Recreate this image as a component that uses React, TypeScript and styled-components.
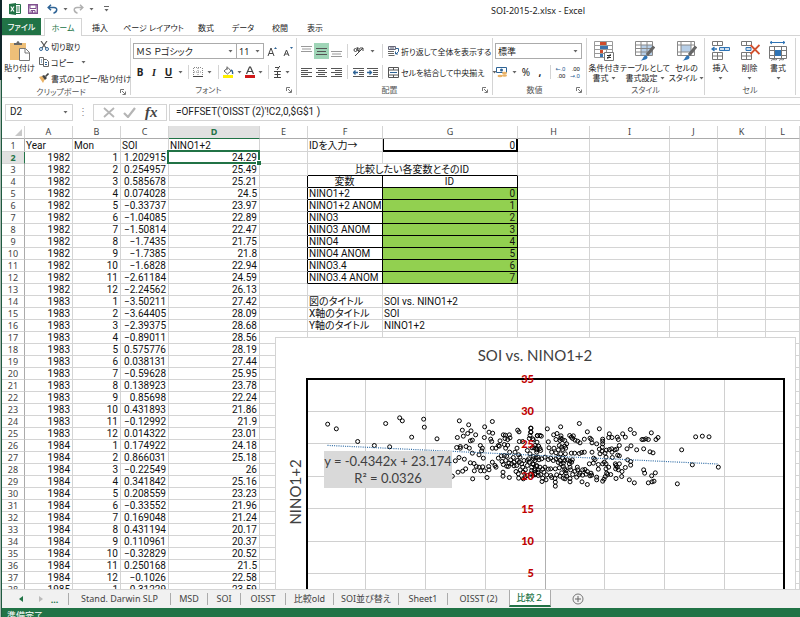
import React from "react";
import styled, { createGlobalStyle, css } from "styled-components";

const UI = '"Noto Sans", "Noto Sans CJK JP", sans-serif';
const CELL = 'Roboto, "Noto Sans CJK JP", sans-serif';
const CHART = 'Lato, "Noto Sans CJK JP", sans-serif';
const GREEN = "#217346";
const LINE = "#d4d4d4";
const BLUE = "#2f6496";

const Global = createGlobalStyle`
  * { box-sizing: border-box; }
  html, body { margin: 0; padding: 0; background: #fff; overflow: hidden; }
  button, input, select { font: inherit; color: inherit; margin: 0; padding: 0; border: 0; background: transparent; border-radius: 0; }
  svg { display: block; flex: none; }
`;

const Window = styled.div`
  display: flex;
  flex-direction: column;
  height: 100vh;
  padding-left: 2px;
  font-family: ${UI};
  font-size: 8px;
  line-height: 11px;
  color: #222;
  font-feature-settings: "palt";
  background: linear-gradient(#10262a, #10262a) 0 0 / 2px 80px no-repeat,
    linear-gradient(90deg, #a9bab2 50%, #1f5a40 50%) 0 80px / 2px 100% no-repeat, #fff;
`;

/* ---------- title bar ---------- */
const TitleBar = styled.header`
  display: flex;
  align-items: center;
  height: 18px;
  flex: none;
  padding-left: 6px;
`;
const QuickButton = styled.button<{ $w: number }>`
  display: flex;
  align-items: center;
  justify-content: center;
  gap: 5px;
  width: ${(p) => p.$w}px;
  height: 18px;
`;
const Title = styled.h1`
  margin: 2px 0 0 376px;
  font-size: 9px;
  font-weight: 400;
  white-space: nowrap;
`;

/* ---------- ribbon tabs ---------- */
const Tabs = styled.nav`
  display: flex;
  height: 18px;
  flex: none;
  border-bottom: 1px solid ${LINE};
`;
const Tab = styled.button<{ $w: number; $kind?: "file" | "active" }>`
  width: ${(p) => p.$w}px;
  height: 18px;
  white-space: nowrap;
  text-align: center;
  ${(p) => p.$kind === "file" && css`background: ${GREEN}; color: #fff; margin-right: 3px; height: 17px; font-weight: 500;`}
  ${(p) => p.$kind === "active" && css`background: #fff; color: ${GREEN}; border: 1px solid ${LINE}; border-bottom: 0;`}
`;

/* ---------- ribbon ---------- */
const Ribbon = styled.section`
  display: flex;
  height: 62px;
  flex: none;
  padding: 2px 0;
  border-bottom: 1px solid ${LINE};
`;
const Group = styled.div<{ $w: number }>`
  display: flex;
  flex-direction: column;
  width: ${(p) => p.$w}px;
  flex: none;
  border-right: 1px solid ${LINE};
`;
const GroupBody = styled.div<{ $row?: boolean }>`
  display: flex;
  flex-direction: ${(p) => (p.$row ? "row" : "column")};
  flex: 1;
  padding: ${(p) => (p.$row ? "0" : "5px 2px 0")};
`;
const GroupFoot = styled.div`
  display: flex;
  align-items: center;
  height: 11px;
  color: #555;
  span { flex: 1; text-align: center; }
  button { width: 10px; }
`;
const Row = styled.div`
  display: flex;
  align-items: center;
  height: 16px;
  margin-bottom: 4px;
  & + & { margin: 0; height: 18px; }
`;
const Tool = styled.button<{ $w: number; $on?: boolean; $bold?: boolean }>`
  display: flex;
  align-items: center;
  justify-content: center;
  width: ${(p) => p.$w}px;
  height: 16px;
  flex: none;
  font-size: 10px;
  white-space: nowrap;
  background: ${(p) => (p.$on ? "#9fd5b7" : "transparent")};
  font-weight: ${(p) => (p.$bold ? 700 : 400)};
  i { font-family: "Liberation Serif", serif; }
`;
const TextTool = styled.button`
  display: flex;
  align-items: center;
  gap: 2px;
  height: 16px;
  white-space: nowrap;
  padding-left: 2px;
  svg:nth-child(2) { margin-left: 5px; }
`;
const Sep = styled.span`
  width: 1px;
  height: 14px;
  flex: none;
  margin: 0 3px;
  background: ${LINE};
`;
const Combo = styled.label<{ $w: number }>`
  display: flex;
  align-items: center;
  width: ${(p) => p.$w}px;
  height: 16px;
  flex: none;
  border: 1px solid #ababab;
  padding: 0 3px 0 2px;
  & + & { border-left: 0; }
  select { appearance: none; flex: 1; min-width: 0; font-size: 9px; line-height: 13px; color: #222; outline: 0; }
`;
const BigTool = styled.button<{ $w: number }>`
  display: flex;
  flex-direction: column;
  align-items: center;
  width: ${(p) => p.$w}px;
  flex: none;
  padding-top: 3px;
  line-height: 10px;
  white-space: nowrap;
  svg:first-child { margin-bottom: 2px; }
`;
const Caption = styled.span`
  display: flex;
  align-items: center;
  gap: 2px;
  height: 10px;
  && svg { margin: 0; }
`;
const ClipStack = styled.div`
  display: flex;
  flex-direction: column;
`;

const Caret = () => (
  <svg width="5" height="3" viewBox="0 0 5 3"><path d="M0.5 0h4L2.5 2.5z" fill="#666" /></svg>
);
const Launcher = () => (
  <button aria-label="詳細">
    <svg width="6" height="6" viewBox="0 0 6 6"><path d="M.5 4V.5H4M2 2l3 3M5.500 2.500v3h-3" fill="none" stroke="#777" /></svg>
  </button>
);
const Lines = ({ d, color = "#555" }: { d: string; color?: string }) => (
  <svg width="11" height="11" viewBox="0 0 11 11"><path d={d} fill="none" stroke={color} /></svg>
);

const ExcelLogo = () => (
  <svg width="12" height="12" viewBox="0 0 12 12">
    <path d="M6 1.500h5.500v9H6" fill="#fff" stroke={GREEN} />
    <path d="M7.500 4h3M7.500 6h3M7.500 8h3" stroke={GREEN} />
    <path d="M0 1l7-1v12l-7-1z" fill={GREEN} />
    <path d="M1.800 3.500l3.200 5M5 3.500l-3.200 5" stroke="#fff" strokeWidth="1.200" />
  </svg>
);
const SaveIcon = () => (
  <svg width="10" height="10" viewBox="0 0 10 10">
    <path d="M.7.7h8.600v8.600H.7z" fill="#fff" stroke="#80508f" strokeWidth="1.400" />
    <path d="M2 1v3.500h6V1M3 9V6.500h4V9" fill="none" stroke="#80508f" /><path d="M4 7h1v2H4z" fill="#80508f" />
  </svg>
);
const UndoIcon = ({ flip, color }: { flip?: boolean; color: string }) => (
  <svg width="11" height="10" viewBox="0 0 11 10">
    <g transform={flip ? "translate(11 0) scale(-1 1)" : undefined} fill="none" stroke={color} strokeWidth="1.500">
      <path d="M4 .8L1.200 3.500 4 6.200M1.500 3.500H7c4 0 3.500 4.500-.5 5.700" />
    </g>
  </svg>
);
const PasteIcon = () => (
  <svg width="20" height="20" viewBox="0 0 20 20">
    <path d="M0 2h16v17H0z" fill="#eebf78" />
    <path d="M4 4V2h2.500C6.500-.5 9.500-.5 9.500 2H12v2z" fill="#666" />
    <path d="M9.500 7.500h6l4 4v8h-10z" fill="#fff" stroke="#777" /><path d="M15 7.500V12h4.500" fill="none" stroke="#777" />
  </svg>
);
const CutIcon = () => (
  <svg width="10" height="10" viewBox="0 0 10 10" fill="none">
    <path d="M2 0l5 7M8 0L3 7" stroke="#555" strokeWidth="1.200" />
    <circle cx="2" cy="8" r="1.500" stroke={BLUE} /><circle cx="8" cy="8" r="1.500" stroke={BLUE} />
  </svg>
);
const CopyIcon = () => (
  <svg width="10" height="10" viewBox="0 0 10 10" fill="#fff" stroke="#666">
    <path d="M.5.5h4v7h-4z" /><path d="M4.500 2.500h3l2 2v5h-5z" /><path d="M2 3h1M2 5h1M6 5.500h2M6 7.500h2" stroke={BLUE} />
  </svg>
);
const BrushIcon = () => (
  <svg width="10" height="10" viewBox="0 0 10 10">
    <path d="M0 4l3-1 3 3-2 4z" fill="#e9b266" /><path d="M3 3l2-1 3 3-2 2z" fill="#444" /><path d="M6.500 3.500L9.500.5" stroke="#444" strokeWidth="1.600" />
  </svg>
);
const BorderIcon = () => (
  <svg width="10" height="10" viewBox="0 0 10 10" fill="none">
    <path d="M.5 1v8M9.500 1v8M5 1v8M1 .5h8M1 5h8" stroke="#888" strokeDasharray="1 1" /><path d="M0 9.500h10" stroke="#444" />
  </svg>
);
const FillIcon = () => (
  <svg width="12" height="12" viewBox="0 0 12 12">
    <path d="M2 5l4-3.500L9 5 5.500 8z" fill="#fff" stroke="#666" /><path d="M5 4V.5" stroke="#666" /><path d="M9 4c2 1 2 2 1.500 4" stroke={BLUE} fill="none" strokeWidth="1.400" />
    <path d="M1 9h10v3H1z" fill="#fff000" />
  </svg>
);
const FontColorIcon = () => (
  <svg width="12" height="12" viewBox="0 0 12 12">
    <path d="M2.500 8L5.500 1h1l3 7M4 5.500h4" fill="none" stroke="#444" strokeWidth="1.200" /><path d="M1 9h10v3H1z" fill="#d01818" />
  </svg>
);
const RubyIcon = () => (
  <svg width="9" height="12" viewBox="0 0 9 12" fill="none" stroke="#444">
    <path d="M2 1.500h4l-2 2.500M6.500 0v1M1 5.500h7M4.500 5.500v6M1.500 8.500h6M1 11.500h7" />
  </svg>
);
const OrientIcon = () => (
  <svg width="11" height="11" viewBox="0 0 11 11" fill="none" stroke="#444">
    <circle cx="2.500" cy="4" r="1.500" /><circle cx="5.500" cy="3.500" r="1.300" /><path d="M4 1l2 5M2 10L10 2M7 2h3v3" />
  </svg>
);
const IndentIcon = ({ right }: { right?: boolean }) => (
  <svg width="11" height="11" viewBox="0 0 11 11" fill="none">
    <path d="M0 1.500h11M6 3.500h5M6 5.500h5M6 7.500h5M0 9.500h11" stroke="#555" />
    <path d={right ? "M0 5.500h4M2.500 3.500l2 2-2 2" : "M5 5.500H1M2.500 3.500l-2 2 2 2"} stroke={BLUE} strokeWidth="1.300" />
  </svg>
);
const WrapIcon = () => (
  <svg width="11" height="11" viewBox="0 0 11 11" fill="none">
    <path d="M.5.500h7v3h-7zM2 2h4" fill="#e4e8ee" stroke="#667" /><path d="M0 5.500h6M0 7.500h6M.5 9.500h6" stroke="#666" /><path d="M8 2.500h2.500V5.500L8 8M7.500 5.500V8H10" stroke={BLUE} />
  </svg>
);
const MergeIcon = () => (
  <svg width="11" height="11" viewBox="0 0 11 11" fill="none">
    <path d="M.5.500h10v10H.5zM.5 3h10M.5 8h10M5.500 0v3M5.500 8v3" stroke="#555" /><path d="M2 5.500h7" stroke={BLUE} />
  </svg>
);
const MoneyIcon = () => (
  <svg width="12" height="12" viewBox="0 0 12 12">
    <path d="M.5 1.500h10v5H.5z" fill="#fff" stroke={BLUE} /><circle cx="5.500" cy="4" r="1.500" fill={BLUE} />
    <ellipse cx="8.500" cy="7" rx="2.500" ry="1.300" fill="#e9b266" /><ellipse cx="8.500" cy="9.500" rx="2.500" ry="1.300" fill="#e9b266" /><ellipse cx="4" cy="10" rx="2.500" ry="1.300" fill="#e9b266" />
  </svg>
);
const DigitText = styled.span`
  display: flex;
  flex-direction: column;
  align-items: flex-end;
  font: 6px/7px Roboto, "DejaVu Sans", sans-serif;
  b { font-weight: 400; color: ${BLUE}; }
`;
const CondIcon = () => (
  <svg width="20" height="20" viewBox="0 0 20 20">
    <path d="M.5.500h18v16H.5zM.5 4.500h18M.5 8.500h18M.5 12.500h18M6.500 0v17M12.500 0v17" fill="#fff" stroke="#999" />
    <path d="M6 1h4v3H6zM6 9h3v3H6z" fill="#cf4b2b" /><path d="M6 5h8v3H6zM6 13h3v3H6z" fill="#3a73ad" /><path d="M10 1h2v3h-2z" fill="#cf4b2b" />
    <path d="M10.500 11.500h9v8h-9z" fill="#fff" stroke="#777" /><path d="M13 14.500h4M13 16.500h4M16.500 13l-3 5" stroke="#333" />
  </svg>
);
const TableStyleIcon = ({ cell }: { cell?: boolean }) => (
  <svg width="20" height="20" viewBox="0 0 20 20">
    <path d="M.5.500h17v14H.5z" fill="#fff" stroke="#888" />
    <path d={cell ? "M4 4h10v7H4z" : "M6 4h11v10H6z"} fill="#b7cfe8" />
    <path d={cell ? "M.5 4h17M.5 11h17M4 .5v14M14 .5v14" : "M.5 4h17M.5 7.500h17M.5 11h17M6 .5v14M12 .5v14"} fill="none" stroke="#888" />
    <path d="M19 5.500L12 14" stroke="#666" strokeWidth="3" /><path d="M5 19.500c3 0 3-5 6-5 3 1 2 5-6 5z" fill="#2f74b5" />
  </svg>
);
const CellGrid = ({ mode }: { mode: "insert" | "delete" | "format" }) => (
  <svg width="20" height="20" viewBox="0 0 20 20" fill="#fff" stroke="#777">
    {mode === "format" ? (
      <>
        <path d="M1.500 5.500h17v12h-17zM1.500 9.500h17M1.500 14.500h17M6.500 5.500v12M13.500 5.500v12" />
        <path d="M7 9h6v6H7z" fill="#2f74b5" stroke="none" />
        <path d="M2 1.500h15M4 0L2 1.500 4 3M15 0l2 1.500L15 3" fill="none" stroke="#2f74b5" />
        <path d="M3 19.500c2-2 4 0 6-1M11 19.500c2-2 3 0 5-1" fill="none" />
      </>
    ) : (
      <>
        <path d="M1.500.5h10v4h-10zM6.500 0v5M1.500 11.500h10v7h-10zM6.500 11v8M1.500 15h10" />
        {mode === "insert" ? (
          <><path d="M8.500 6.500h10v3h-10zM13.500 6v4" fill="#cfe0f0" stroke="#2f74b5" /><path d="M1 8h5M3.500 6L1 8l2.500 2" fill="none" stroke="#2f74b5" strokeWidth="1.300" /></>
        ) : (
          <><path d="M6 6.500h5v3H6z" fill="#cfe0f0" stroke="#2f74b5" /><path d="M10.500 4l9 9M19.500 4l-9 9" stroke="#d2522f" strokeWidth="1.800" /></>
        )}
      </>
    )}
  </svg>
);

/* ---------- formula bar ---------- */
const FormulaBar = styled.section`
  display: flex;
  align-items: center;
  height: 28px;
  flex: none;
  padding-left: 3px;
  font-family: ${CELL};
  font-size: 10px;
`;
const Boxed = styled.div<{ $w?: number }>`
  display: flex;
  align-items: center;
  height: 17px;
  border: 1px solid ${LINE};
  padding: 0 4px;
  ${(p) => (p.$w ? css`width: ${p.$w}px; flex: none;` : css`flex: 1; border-right: 0; padding-left: 6px; margin-left: 2px;`)}
  input { flex: 1; min-width: 0; outline: 0; line-height: 14px; }
`;
const Dots = styled.span`
  width: 20px;
  flex: none;
  text-align: center;
  color: #888;
  line-height: 14px;
`;
const FxButton = styled.button`
  display: flex;
  justify-content: center;
  align-items: center;
  flex: 1;
  height: 15px;
  color: #444;
  font: italic 700 15px/14px "Liberation Serif", serif;
`;

/* ---------- sheet ---------- */
const Sheet = styled.main`
  position: relative;
  flex: 1;
  min-height: 0;
  overflow: hidden;
`;
const Grid = styled.table`
  width: 100%;
  table-layout: fixed;
  border-collapse: separate;
  border-spacing: 0;
  font-family: ${CELL};
  font-size: 10px;
  line-height: 11px;
  color: #111;
`;
const ColHead = styled.th<{ $on?: boolean }>`
  height: 13px;
  padding: 0;
  font: ${(p) => (p.$on ? 700 : 400)} 9px/12px ${UI};
  color: ${(p) => (p.$on ? GREEN : "#444")};
  background: ${(p) => (p.$on ? "#e1e1e1" : "#fff")};
  border-right: 1px solid ${LINE};
  border-bottom: 1px solid ${(p) => (p.$on ? GREEN : "#ababab")};
  svg { margin: 0 2px 0 auto; }
`;
const RowHead = styled.th<{ $on?: boolean }>`
  padding: 0;
  font: ${(p) => (p.$on ? 700 : 400)} 9px/11px ${UI};
  color: ${(p) => (p.$on ? GREEN : "#444")};
  background: ${(p) => (p.$on ? "#e1e1e1" : "#fff")};
  border-right: 1px solid ${(p) => (p.$on ? GREEN : "#ababab")};
  border-bottom: 1px solid ${LINE};
`;
type CellKind = "num" | "text" | "center" | "green" | "entry";
const Cell = styled.td<{ $kind?: CellKind; $right?: boolean; $bottom?: boolean }>`
  height: 12px;
  padding: ${(p) => (p.$kind === "text" ? "0 0 0 1px" : "0 2px 0 1px")};
  white-space: nowrap;
  overflow: hidden;
  text-align: ${(p) => (p.$kind === "center" ? "center" : p.$kind === "text" ? "left" : "right")};
  background: ${(p) => (p.$kind === "green" ? "#92d050" : "#fff")};
  border-right: 1px solid ${(p) => (p.$right ? "#000" : LINE)};
  border-bottom: 1px solid ${(p) => (p.$bottom ? "#000" : LINE)};
  ${(p) => p.$kind === "entry" && css`box-shadow: inset 1px 0 #000, inset -1px -1px #000; border-color: #000;`}
`;
const TallRow = styled.tr`
  td { height: 13px; }
`;
const ActiveCell = styled(Cell)`
  position: relative;
  overflow: visible;
  &::before { content: ""; position: absolute; inset: -2px -1px -1px -2px; border: 2px solid ${GREEN}; }
  &::after { content: ""; position: absolute; right: -2px; bottom: -2px; width: 4px; height: 4px; background: ${GREEN}; border: solid #fff; border-width: 1px 0 0 1px; }
`;

const series: [string, string][] = [
  ["1.202915", "24.29"], ["0.254957", "25.49"], ["0.585678", "25.21"], ["0.074028", "24.5"],
  ["−0.33737", "23.97"], ["−1.04085", "22.89"], ["−1.50814", "22.47"], ["−1.7435", "21.75"],
  ["−1.7385", "21.8"], ["−1.6828", "22.94"], ["−2.61184", "24.59"], ["−2.24562", "26.13"],
  ["−3.50211", "27.42"], ["−3.64405", "28.09"], ["−2.39375", "28.68"], ["−0.89011", "28.56"],
  ["0.575776", "28.19"], ["0.038131", "27.44"], ["−0.59628", "25.95"], ["0.138923", "23.78"],
  ["0.85698", "22.24"], ["0.431893", "21.86"], ["−0.12992", "21.9"], ["0.014322", "23.01"],
  ["0.174922", "24.18"], ["0.866031", "25.18"], ["−0.22549", "26"], ["0.341842", "25.16"],
  ["0.208559", "23.23"], ["−0.33552", "21.96"], ["0.169048", "21.24"], ["0.431194", "20.17"],
  ["0.110961", "20.37"], ["−0.32829", "20.52"], ["0.250168", "21.5"], ["−0.1026", "22.58"],
  ["−0.31229", "23.59"],
];
const variables = ["NINO1+2", "NINO1+2 ANOM", "NINO3", "NINO3 ANOM", "NINO4", "NINO4 ANOM", "NINO3.4", "NINO3.4 ANOM"];
const labels: Record<number, [string, string]> = {
  14: ["図のタイトル", "SOI vs. NINO1+2"],
  15: ["X軸のタイトル", "SOI"],
  16: ["Y軸のタイトル", "NINO1+2"],
};
const columns: [string, number | undefined][] = [
  ["A", 48], ["B", 48], ["C", 48], ["D", 91], ["E", 48], ["F", 75], ["G", 135], ["H", 72], ["I", 80], ["J", 48], ["K", 48], ["L", undefined],
];

function MiddleCells({ row }: { row: number }) {
  if (row === 3)
    return (<><Cell /><Cell colSpan={2} $kind="center" $bottom>比較したい各変数とそのID</Cell></>);
  if (row === 4)
    return (<><Cell $right /><Cell $kind="center" $right $bottom>変数</Cell><Cell $kind="center" $right $bottom>ID</Cell></>);
  if (row >= 5 && row <= 12)
    return (<><Cell $right /><Cell $kind="text" $right $bottom>{variables[row - 5]}</Cell><Cell $kind="green" $right $bottom>{row - 5}</Cell></>);
  const pair = labels[row];
  return (<><Cell /><Cell $kind="text">{pair?.[0]}</Cell><Cell $kind="text">{pair?.[1]}</Cell></>);
}

/* ---------- chart ---------- */
const ChartFrame = styled.figure`
  position: absolute;
  left: 273px;
  top: 211px;
  margin: 0;
  width: 521px;
  background: #fff;
  border: 1px solid ${LINE};
  svg { font-family: ${CHART}; overflow: visible; }
`;

/* Sample positions on a grid of three steps per chart pixel, by region. */
const clusters: { ox: number; oy: number; pts: number[] }[] = [
  { ox: -18, oy: -24, pts: [173,281,199,295,263,333,313,345,347,279,389,262,397,271,461,266,463,290,425,320,501,325,359,349,547,437] },
  { ox: 492, oy: 216, pts: [58,31,86,43,67,59,134,49,157,33,52,81,70,77,83,69,93,61,91,91,97,89,107,73,133,81,147,65,158,68,152,86,155,93,50,111,61,108,61,113,78,108,88,113,97,128,121,105,127,113,125,121,117,133,130,143,57,141,46,151,73,146,91,157,102,159,54,185,68,182,77,175,103,181,98,205,109,168,117,170,122,181,128,169,133,181,141,201,147,178,146,168,157,113,168,113,175,105,180,91,178,107,190,73,196,74,208,73,195,84,203,87,210,82,193,102,203,104,197,113,157,155,165,165,175,143,184,136,193,135,200,137,186,153,190,162,197,150,200,167,207,158,212,148,205,168,168,170,189,185,189,197,208,201,209,125,225,125,231,113,220,141,222,155,232,150,236,133,240,140,233,59,237,64,238,93,248,93,228,183,235,190,241,178,248,170,236,203,250,185,256,178,262,165,245,160,252,150,262,150,272,53,272,65,270,75,268,84,280,88,292,76,291,95,262,120,270,130,276,112,285,105,290,125,268,155,278,160,285,150,275,170,283,180,290,168,272,190,262,195,255,199,285,193,295,185,266,145,280,138,294,140,215,160,222,166,230,165,238,155,250,205] },
  { ox: 762, oy: 216, pts: [52,55,92,49,148,39,172,64,208,55,3,53,3,65,8,85,22,75,30,75,34,77,55,94,71,73,81,69,92,83,93,76,90,90,97,87,78,87,104,90,119,75,124,80,130,76,128,84,135,89,143,92,150,97,163,86,180,83,184,87,186,97,200,100,218,86,218,92,218,100,238,70,236,81,246,81,262,80,265,87,278,70,286,80,18,113,26,107,30,114,32,120,20,118,12,112,57,112,65,125,72,113,78,127,85,118,88,105,95,110,98,117,104,107,107,113,110,100,106,130,92,130,124,128,134,128,148,129,155,126,163,125,186,125,208,116,217,110,216,122,225,128,229,119,238,117,245,115,246,125,255,118,260,116,268,105,210,130,228,140,247,141,263,134,268,136,191,143,195,147,178,160,190,158,205,162,205,176,218,160,223,155,228,160,10,145,18,142,27,148,35,145,45,140,55,147,62,143,70,150,78,145,85,140,90,150,98,143,104,150,112,148,120,152,127,148,118,160,125,155,85,156,93,160,100,158,10,162,20,165,15,175,25,178,30,170,38,176,45,170,42,185,55,176,62,175,76,175,88,172,100,168,104,175,108,180,120,170,122,178,135,182,142,170,143,178,150,188,158,178,165,177,172,183,158,194,168,191,172,222,185,194,183,188,180,196,200,200,200,208,218,212,222,206,226,198,230,188,233,192,242,192,228,175,236,170,258,165,262,170,257,175,265,178,256,160,268,160,276,183,275,198,258,204,156,214,120,214,120,204,100,203,110,197,105,205,90,197,95,187,75,204,80,193,76,227,76,215,62,195,65,201,48,208,36,213,38,203,25,195,32,192,15,190,5,180,8,195,50,193,108,188,128,192,140,200,147,193] },
  { ox: 762, oy: -24, pts: [301,297,313,309,364,307,336,327,341,327,348,325,355,327,384,321,378,327,303,346,291,355,320,358,341,355,360,364,369,367,293,388,302,393,302,404,286,411,341,418,344,428,376,427,365,436,298,448,313,457,355,457,366,454,372,452,442,460,455,358,487,403,497,319,517,317,537,319,565,410] },
];

const PLOT = { left: 30, right: 508, top: 41, stepX: 59.75, stepY: 32.4 };

function ScatterChart() {
  const dots: React.ReactNode[] = [];
  clusters.forEach((c, k) => {
    for (let i = 0; i < c.pts.length; i += 2)
      dots.push(<circle key={`${k}-${i}`} cx={(c.ox + c.pts[i]) / 3} cy={(c.oy + c.pts[i + 1]) / 3 + 0.5} r="2" />);
  });
  const bottom = PLOT.top + PLOT.stepY * 7;
  return (
    <ChartFrame>
      <svg width="519" height="300" viewBox="0 0 519 300" role="img" aria-label="SOI vs. NINO1+2">
        <g stroke="#d0d0d0" shapeRendering="crispEdges">
          {[1, 2, 3, 4, 5, 6, 7].map((n) => (
            <line key={`v${n}`} x1={PLOT.left + n * PLOT.stepX} x2={PLOT.left + n * PLOT.stepX} y1={PLOT.top} y2={bottom} stroke={n === 4 ? "#b0b0b0" : undefined} />
          ))}
          {[1, 2, 3, 4, 5, 6].map((n) => (
            <line key={`h${n}`} x1={PLOT.left} x2={PLOT.right} y1={PLOT.top + n * PLOT.stepY} y2={PLOT.top + n * PLOT.stepY} />
          ))}
        </g>
        <path d={`M${PLOT.left + 1} ${bottom}V${PLOT.top}H${PLOT.right}V${bottom}`} fill="none" stroke="#000" strokeWidth="2" shapeRendering="crispEdges" />
        <g fill="none" stroke="#000">{dots}</g>
        <path d="M51.500 107.400L442 126" stroke="#2f6ca5" strokeWidth="1.200" strokeDasharray="1 1.200" />
        <g fill="#c00000" fontSize="11" fontWeight="900" textAnchor="end">
          {[35, 30, 25, 20, 15, 10, 5].map((v, n) => (
            <text key={v} x="258" y={PLOT.top + n * PLOT.stepY + 4}>{v}</text>
          ))}
        </g>
        <rect x="48" y="113" width="128" height="37" fill="#d9d9d9" />
        <g fill="#404040" textAnchor="middle">
          <g fontSize="13">
            <text x="112" y="128">y = -0.4342x + 23.174</text>
            <text x="112" y="145">R² = 0.0326</text>
          </g>
          <g fontSize="15">
            <text x="259" y="23">SOI vs. NINO1+2</text>
            <text transform="translate(25 154) rotate(-90)">NINO1+2</text>
          </g>
        </g>
      </svg>
    </ChartFrame>
  );
}

/* ---------- bottom ---------- */
const SheetTabs = styled.nav`
  display: flex;
  align-items: center;
  height: 19px;
  flex: none;
  background: #f1f1f1;
  border-top: 1px solid ${LINE};
  font-size: 9px;
  color: #444;
`;
const NavButton = styled.button<{ $w: number }>`
  display: flex;
  align-items: center;
  justify-content: center;
  width: ${(p) => p.$w}px;
  color: ${GREEN};
  font-weight: 700;
`;
const SheetTab = styled.button<{ $w: number; $on?: boolean }>`
  width: ${(p) => p.$w}px;
  height: 12px;
  flex: none;
  white-space: nowrap;
  border-left: 1px solid #ababab;
  line-height: 12px;
  ${(p) => p.$on && css`height: 17px; align-self: flex-start; background: #fff; color: ${GREEN}; font-weight: 500; font-feature-settings: normal; border-right: 1px solid #ababab; border-bottom: 2px solid ${GREEN};`}
`;
const AddSheet = styled.button`
  margin-left: 21px;
`;
const StatusBar = styled.footer`
  height: 9px;
  flex: none;
  overflow: hidden;
  padding: 3px 0 0 5px;
  background: ${GREEN};
  color: #fff;
  font-size: 9px;
  line-height: 10px;
`;

const sheetNames: [string, number][] = [
  ["Stand. Darwin SLP", 102], ["MSD", 37], ["SOI", 33], ["OISST", 45], ["比較old", 48], ["SOI並び替え", 65], ["Sheet1", 49], ["OISST (2)", 62],
];

export default function App() {
  return (
    <Window>
      <Global />
      <TitleBar>
        <QuickButton $w={13} aria-label="Excel"><ExcelLogo /></QuickButton>
        <QuickButton $w={24} aria-label="上書き保存"><SaveIcon /></QuickButton>
        <QuickButton $w={24} aria-label="元に戻す"><UndoIcon color={BLUE} /><Caret /></QuickButton>
        <QuickButton $w={28} aria-label="やり直し"><UndoIcon flip color="#b0b0b0" /><Caret /></QuickButton>
        <QuickButton $w={18} aria-label="カスタマイズ">
          <svg width="5" height="6" viewBox="0 0 5 6"><path d="M0 .5h5" stroke="#666" /><path d="M.5 3h4l-2 2.500z" fill="#666" /></svg>
        </QuickButton>
        <Title>SOI-2015-2.xlsx - Excel</Title>
      </TitleBar>

      <Tabs aria-label="リボン">
        <Tab $w={39} $kind="file">ファイル</Tab>
        <Tab $w={38} $kind="active">ホーム</Tab>
        <Tab $w={36}>挿入</Tab>
        <Tab $w={71}>ページ レイアウト</Tab>
        <Tab $w={34}>数式</Tab>
        <Tab $w={40}>データ</Tab>
        <Tab $w={34}>校閲</Tab>
        <Tab $w={36}>表示</Tab>
      </Tabs>

      <Ribbon>
        <Group $w={129}>
          <GroupBody $row>
            <BigTool $w={35}><PasteIcon /><Caption>貼り付け</Caption><Caption><Caret /></Caption></BigTool>
            <ClipStack>
              <TextTool><CutIcon />切り取り</TextTool>
              <TextTool><CopyIcon />コピー<Caret /></TextTool>
              <TextTool><BrushIcon />書式のコピー/貼り付け</TextTool>
            </ClipStack>
          </GroupBody>
          <GroupFoot><span>クリップボード</span><Launcher /></GroupFoot>
        </Group>

        <Group $w={166}>
          <GroupBody>
            <Row>
              <Combo $w={104}><select aria-label="フォント" defaultValue="pg"><option value="pg">ＭＳ Ｐゴシック</option></select><Caret /></Combo>
              <Combo $w={27}><select aria-label="フォント サイズ" defaultValue="11"><option>11</option></select><Caret /></Combo>
              <Tool $w={17} aria-label="拡大">
                <svg width="11" height="11" viewBox="0 0 11 11" fill="none"><path d="M1 10l3-8 3 8M2 7.500h4" stroke="#444" /><path d="M7 3l1.500-2L10 3z" fill={BLUE} /></svg>
              </Tool>
              <Tool $w={14} aria-label="縮小">
                <svg width="11" height="11" viewBox="0 0 11 11" fill="none"><path d="M1 10l2.500-6L6 10M2 8h3" stroke="#444" /><path d="M7 1h3L8.500 3z" fill={BLUE} /></svg>
              </Tool>
            </Row>
            <Row>
              <Tool $w={14} $bold>B</Tool>
              <Tool $w={14} $bold><i>I</i></Tool>
              <Tool $w={15} $bold><u>U</u></Tool>
              <Tool $w={9} aria-label="下線の種類"><Caret /></Tool>
              <Sep />
              <Tool $w={11} aria-label="罫線"><BorderIcon /></Tool>
              <Tool $w={12} aria-label="罫線の種類"><Caret /></Tool>
              <Sep />
              <Tool $w={12} aria-label="塗りつぶし"><FillIcon /></Tool>
              <Tool $w={10} aria-label="塗りつぶしの色"><Caret /></Tool>
              <Tool $w={12} aria-label="文字色"><FontColorIcon /></Tool>
              <Tool $w={9} aria-label="フォントの色"><Caret /></Tool>
              <Sep />
              <Tool $w={10} aria-label="ふりがな"><RubyIcon /></Tool>
              <Tool $w={10} aria-label="ふりがなの設定"><Caret /></Tool>
            </Row>
          </GroupBody>
          <GroupFoot><span>フォント</span><Launcher /></GroupFoot>
        </Group>

        <Group $w={196}>
          <GroupBody>
            <Row>
              <Tool $w={15} aria-label="上揃え"><Lines d="M0 .5h11M1 3h9M0 5.500h11" color="#999" /></Tool>
              <Tool $w={15} $on aria-label="上下中央揃え"><Lines d="M0 2.500h11M1 5.500h9M0 8.500h11" /></Tool>
              <Tool $w={15} aria-label="下揃え"><Lines d="M0 5.500h11M1 8h9M0 10.500h11" color="#999" /></Tool>
              <Sep />
              <Tool $w={14} aria-label="方向"><OrientIcon /></Tool>
              <Tool $w={14} aria-label="方向の設定"><Caret /></Tool>
              <Sep />
              <TextTool><WrapIcon />折り返して全体を表示する</TextTool>
            </Row>
            <Row>
              <Tool $w={15} aria-label="左揃え"><Lines d="M0 1.500h11M0 3.500h7M0 5.500h11M0 7.500h7M0 9.500h11" /></Tool>
              <Tool $w={15} aria-label="中央揃え"><Lines d="M0 1.500h11M2 3.500h7M0 5.500h11M2 7.500h7M0 9.500h11" /></Tool>
              <Tool $w={15} aria-label="右揃え"><Lines d="M0 1.500h11M4 3.500h7M0 5.500h11M4 7.500h7M0 9.500h11" /></Tool>
              <Sep />
              <Tool $w={14} aria-label="インデントを減らす"><IndentIcon /></Tool>
              <Tool $w={14} aria-label="インデントを増やす"><IndentIcon right /></Tool>
              <Sep />
              <TextTool><MergeIcon />セルを結合して中央揃え<Caret /></TextTool>
            </Row>
          </GroupBody>
          <GroupFoot><span>配置</span><Launcher /></GroupFoot>
        </Group>

        <Group $w={94}>
          <GroupBody>
            <Row>
              <Combo $w={87}><select aria-label="表示形式" defaultValue="g"><option value="g">標準</option></select><Caret /></Combo>
            </Row>
            <Row>
              <Tool $w={14} aria-label="通貨"><MoneyIcon /></Tool>
              <Tool $w={10} aria-label="通貨の種類"><Caret /></Tool>
              <Tool $w={14}>%</Tool>
              <Tool $w={14} $bold>,</Tool>
              <Sep />
              <Tool $w={13} aria-label="小数点以下を増やす"><DigitText><b>←.0</b><span>.00</span></DigitText></Tool>
              <Tool $w={16} aria-label="小数点以下を減らす"><DigitText><span>.00</span><b>→.0</b></DigitText></Tool>
            </Row>
          </GroupBody>
          <GroupFoot><span>数値</span><Launcher /></GroupFoot>
        </Group>

        <Group $w={118}>
          <GroupBody $row>
            <BigTool $w={34}><CondIcon /><Caption>条件付き</Caption><Caption>書式<Caret /></Caption></BigTool>
            <BigTool $w={48}><TableStyleIcon /><Caption>テーブルとして</Caption><Caption>書式設定<Caret /></Caption></BigTool>
            <BigTool $w={35}><TableStyleIcon cell /><Caption>セルの</Caption><Caption>スタイル<Caret /></Caption></BigTool>
          </GroupBody>
          <GroupFoot><span>スタイル</span></GroupFoot>
        </Group>

        <Group $w={91}>
          <GroupBody $row>
            <BigTool $w={31}><CellGrid mode="insert" /><Caption>挿入</Caption><Caption><Caret /></Caption></BigTool>
            <BigTool $w={27}><CellGrid mode="delete" /><Caption>削除</Caption><Caption><Caret /></Caption></BigTool>
            <BigTool $w={30}><CellGrid mode="format" /><Caption>書式</Caption><Caption><Caret /></Caption></BigTool>
          </GroupBody>
          <GroupFoot><span>セル</span></GroupFoot>
        </Group>
      </Ribbon>

      <FormulaBar>
        <Boxed $w={68}><input aria-label="名前ボックス" defaultValue="D2" /><Caret /></Boxed>
        <Dots>⋮</Dots>
        <Boxed $w={74}>
          <FxButton aria-label="キャンセル"><svg width="12" height="11" viewBox="0 0 12 11"><path d="M1 1l10 9M11 1L1 10" stroke="#b5b5b5" strokeWidth="1.800" /></svg></FxButton>
          <FxButton aria-label="入力"><svg width="13" height="11" viewBox="0 0 13 11"><path d="M1 6l4 4 7-9" fill="none" stroke="#b5b5b5" strokeWidth="2.200" /></svg></FxButton>
          <FxButton>fx</FxButton>
        </Boxed>
        <Boxed><input aria-label="数式バー" defaultValue="=OFFSET('OISST (2)'!C2,0,$G$1 )" /></Boxed>
      </FormulaBar>

      <Sheet>
        <Grid>
          <colgroup>
            <col style={{ width: 23 }} />
            {columns.map(([name, w]) => <col key={name} style={{ width: w }} />)}
          </colgroup>
          <thead>
            <tr>
              <ColHead><svg width="7" height="7" viewBox="0 0 7 7"><path d="M7 0v7H0z" fill="#c8c8c8" /></svg></ColHead>
              {columns.map(([name]) => <ColHead key={name} $on={name === "D"}>{name}</ColHead>)}
            </tr>
          </thead>
          <tbody>
            <TallRow>
              <RowHead>1</RowHead>
              <Cell $kind="text">Year</Cell><Cell $kind="text">Mon</Cell><Cell $kind="text">SOI</Cell><Cell $kind="text">NINO1+2</Cell>
              <Cell /><Cell $kind="text">IDを入力→</Cell><Cell $kind="entry">0</Cell>
              <Cell /><Cell /><Cell /><Cell /><Cell />
            </TallRow>
            {series.map(([soi, nino], i) => {
              const row = i + 2;
              return (
                <tr key={row}>
                  <RowHead $on={row === 2}>{row}</RowHead>
                  <Cell>{1982 + Math.floor(i / 12)}</Cell>
                  <Cell>{(i % 12) + 1}</Cell>
                  <Cell>{soi}</Cell>
                  {row === 2 ? <ActiveCell>{nino}</ActiveCell> : <Cell>{nino}</Cell>}
                  <MiddleCells row={row} />
                  <Cell /><Cell /><Cell /><Cell /><Cell />
                </tr>
              );
            })}
          </tbody>
        </Grid>
        <ScatterChart />
      </Sheet>

      <SheetTabs aria-label="シート">
        <NavButton $w={38} aria-label="前のシート"><svg width="5" height="6" viewBox="0 0 5 6"><path d="M4 0v6L0 3z" fill={GREEN} /></svg></NavButton>
        <NavButton $w={1} aria-label="次のシート"><svg width="5" height="6" viewBox="0 0 5 6"><path d="M1 0v6l4-3z" fill="#bbb" /></svg></NavButton>
        <NavButton $w={27}>...</NavButton>
        {sheetNames.map(([name, w]) => <SheetTab key={name} $w={w}>{name}</SheetTab>)}
        <SheetTab $w={42} $on>比較２</SheetTab>
        <AddSheet aria-label="新しいシート">
          <svg width="12" height="12" viewBox="0 0 12 12"><circle cx="6" cy="6" r="5" fill="none" stroke="#777" /><path d="M6 3v6M3 6h6" stroke="#666" /></svg>
        </AddSheet>
      </SheetTabs>
      <StatusBar>準備完了</StatusBar>
    </Window>
  );
}
